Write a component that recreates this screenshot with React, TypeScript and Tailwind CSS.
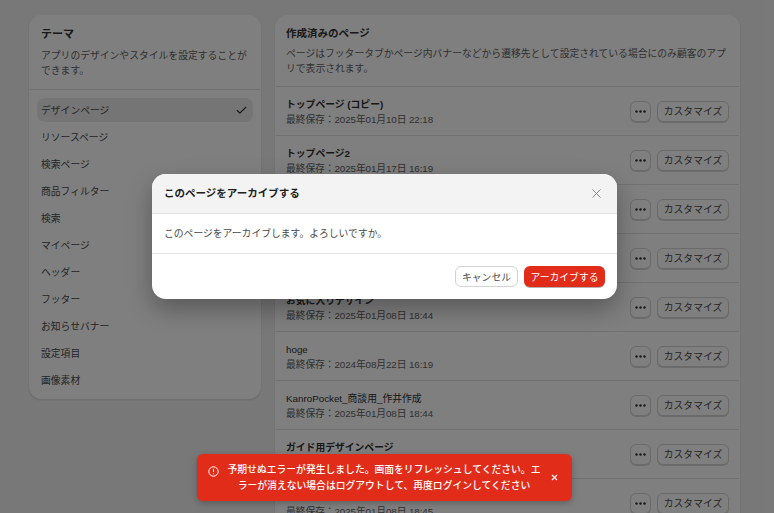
import { Check, X } from "lucide-react";

const nav = ["デザインページ","リソースページ","検索ページ","商品フィルター","検索","マイページ","ヘッダー","フッター","お知らせバナー","設定項目","画像素材"];
const rows: [string, string, boolean][] = [
  ["トップページ (コピー)","2025年01月10日 22:18",true],
  ["トップページ2","2025年01月17日 16:19",true],
  ["デザインページ","2025年01月08日 18:44",true],
  ["キャンペーン","2025年01月08日 18:44",true],
  ["お気に入りデザイン","2025年01月08日 18:44",true],
  ["hoge","2024年08月22日 16:19",false],
  ["KanroPocket_商談用_作井作成","2025年01月08日 18:44",false],
  ["ガイド用デザインページ","2025年01月08日 18:45",true],
  ["季節のデザイン","2025年01月08日 18:45",true],
];
const font = "[font-family:'Liberation_Sans','Noto_Sans_CJK_JP',sans-serif]";

export default function App() {
  return (
    <div className={`relative h-[513px] w-[774px] overflow-hidden bg-[#f1f1f1] text-[9.8px] text-[#303030] ${font}`}>
      <div className="flex items-start gap-[14px] pl-[29px] pt-[15px]">
        <section className="w-[232px] rounded-xl border border-white bg-white shadow-[0_1px_2px_rgba(0,0,0,0.12)]">
          <div className="border-b border-[#e3e3e3] px-[11px] pb-[11px] pt-[8px]">
            <h2 className="text-[11px] font-bold leading-5">テーマ</h2>
            <p className="mt-[4px] leading-[15px] text-[#616161]">アプリのデザインやスタイルを設定することができます。</p>
          </div>
          <ul className="flex flex-col gap-[3px] px-[7px] pb-[6px] pt-[8px]">
            {nav.map((n, i) => (
              <li key={n} className={`flex h-[24px] items-center justify-between rounded-lg px-[4px] ${i === 0 ? "bg-[#ebebeb]" : ""}`}>
                <span className="pt-[2px] text-[#4a4a4a]">{n}</span>
                {i === 0 && <Check size={13} strokeWidth={2} className="mr-[1px] text-[#303030]" />}
              </li>
            ))}
          </ul>
        </section>
        <section className="w-[465px] rounded-t-xl border border-white bg-white shadow-[0_1px_2px_rgba(0,0,0,0.12)]">
          <div className="h-[70px] px-[10px] pt-[7px]">
            <h2 className="text-[10.5px] font-bold leading-5">作成済みのページ</h2>
            <p className="mt-[3px] leading-[15px] text-[#616161]">ページはフッタータブかページ内バナーなどから遷移先として設定されている場合にのみ顧客のアプリで表示されます。</p>
          </div>
          {rows.map(([t, d, b]) => (
            <div key={t} className="flex h-[49px] items-center justify-between border-t border-[#e3e3e3] px-[10px]">
              <div className="pt-[1px] leading-[15px]">
                <div className={b ? "font-bold" : ""}>{t}</div>
                <div className="tracking-[-0.1px] text-[#616161]">最終保存：{d}</div>
              </div>
              <div className="flex gap-[6px]">
                <button className="flex h-[21px] w-[21px] items-center justify-center rounded-md border border-[#d4d4d4] bg-white shadow-[0_1px_0_rgba(0,0,0,0.15)]">
                  <svg width="11" height="3" viewBox="0 0 11 3" fill="#303030"><circle cx="1.5" cy="1.5" r="1.2"/><circle cx="5.5" cy="1.5" r="1.2"/><circle cx="9.5" cy="1.5" r="1.2"/></svg>
                </button>
                <button className="h-[21px] w-[72px] rounded-md border border-[#d4d4d4] bg-white pt-[2px] text-[#4a4a4a] shadow-[0_1px_0_rgba(0,0,0,0.15)]">カスタマイズ</button>
              </div>
            </div>
          ))}
        </section>
      </div>

      <div className="absolute inset-0 bg-black/50" />

      <div className="absolute left-[152px] top-[174px] w-[465px] overflow-hidden rounded-[14px] bg-white shadow-[0_10px_24px_rgba(0,0,0,0.3)]">
        <div className="flex h-[40px] items-center justify-between border-b border-[#e3e3e3] bg-[#f3f3f3] pl-[12px] pr-[13px]">
          <h3 className="text-[10.5px] font-bold text-[#202020]">このページをアーカイブする</h3>
          <X size={15} strokeWidth={1.5} className="text-[#808080]" />
        </div>
        <div className="flex h-[40px] items-center border-b border-[#e3e3e3] pl-[12px] pt-[2px] text-[#4a4a4a]">このページをアーカイブします。よろしいですか。</div>
        <div className="flex h-[45px] items-center justify-end gap-[6px] pr-[12px]">
          <button className="h-[21px] w-[63px] rounded-md border border-[#d4d4d4] bg-white pt-[3px] text-[#4a4a4a]">キャンセル</button>
          <button className="h-[21px] w-[81px] rounded-md bg-[#e22c1a] pt-[3px] text-white shadow-[0_1px_0_rgba(0,0,0,0.3)]">アーカイブする</button>
        </div>
      </div>

      <div className="absolute left-[197px] top-[454px] flex h-[47px] w-[375px] items-center rounded-md bg-[#e22c1a] pl-[11px] pr-[12px] text-white shadow-[0_2px_6px_rgba(0,0,0,0.25)]">
        <svg className="mb-[12px] shrink-0" width="11" height="11" viewBox="0 0 11 11" fill="none" stroke="white" strokeWidth="1"><circle cx="5.5" cy="5.5" r="4.7"/><path d="M5.5 2.8v3.2M5.5 7.3v.9"/></svg>
        <p className="ml-[4px] w-[322px] text-center font-medium leading-[16px]">
          予期せぬエラーが発生しました。画面をリフレッシュしてください。エ<br />
          ラーが消えない場合はログアウトして、再度ログインしてください
        </p>
        <X size={9} strokeWidth={3} className="ml-[5px] shrink-0" />
      </div>
    </div>
  );
}
